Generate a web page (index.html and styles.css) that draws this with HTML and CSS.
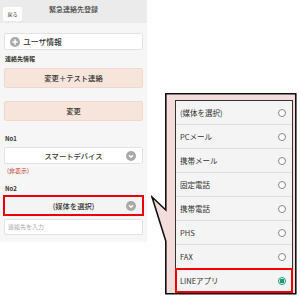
FILE: index.html
```html
<!DOCTYPE html>
<html lang="ja">
<head>
<meta charset="utf-8">
<link rel="stylesheet" href="styles.css">
</head>
<body>
<div class="phone">
  <div class="hdr">
    <span class="back">戻る</span>
    <span class="title">緊急連絡先登録</span>
    <span></span>
  </div>
  <div class="content">
    <div class="btn white user">
      <svg class="ico" viewBox="0 0 10 10" width="10" height="10"><circle cx="5" cy="5" r="5" fill="#a9a9a9"/><path d="M5 2.3V7.7M2.3 5H7.7" stroke="#fff" stroke-width="1.6"/></svg>
      <span>ユーザ情報</span>
    </div>
    <div class="label l1">連絡先情報</div>
    <div class="btn peach b1">変更＋テスト連絡</div>
    <div class="btn peach b2">変更</div>
    <div class="label l2">No1</div>
    <div class="btn white sel">
      <span>スマートデバイス</span>
      <svg class="chev" viewBox="0 0 10 10" width="10" height="10"><circle cx="5" cy="5" r="5" fill="#a9a9a9"/><path d="M3 4.2L5 6.2L7 4.2" stroke="#fff" stroke-width="1.5" fill="none"/></svg>
    </div>
    <div class="hidden">(非表示)</div>
    <div class="label l3">No2</div>
    <div class="redbox">
      <div class="btn white sel sel2">
        <span>(媒体を選択)</span>
        <svg class="chev" viewBox="0 0 10 10" width="10" height="10"><circle cx="5" cy="5" r="5" fill="#a9a9a9"/><path d="M3 4.2L5 6.2L7 4.2" stroke="#fff" stroke-width="1.5" fill="none"/></svg>
      </div>
    </div>
    <div class="input">連絡先を入力</div>
  </div>
</div>

<div class="callout">
  <svg class="bubble" viewBox="0 0 146 202" width="146" height="202">
    <path d="M14.8 0.8H144.8V200.8H14.8V148L1 104L14.8 117Z" fill="#f2dcdc" stroke="#111" stroke-width="1.6" stroke-linejoin="miter"/>
  </svg>
  <ul class="list">
    <li>(媒体を選択)<i class="radio"></i></li>
    <li>PCメール<i class="radio"></i></li>
    <li>携帯メール<i class="radio"></i></li>
    <li>固定電話<i class="radio"></i></li>
    <li>携帯電話<i class="radio"></i></li>
    <li>PHS<i class="radio"></i></li>
    <li>FAX<i class="radio"></i></li>
    <li class="on">LINEアプリ<i class="radio checked"></i></li>
  </ul>
</div>
</body>
</html>
```

FILE: styles.css
```css
* { box-sizing: border-box; }
html, body { margin: 0; padding: 0; background: #fff; }
body {
  width: 300px;
  height: 297px;
  position: relative;
  overflow: hidden;
  font-family: "Noto Sans CJK JP", "Noto Sans", sans-serif;
  color: #333;
}
.phone {
  width: 147px;
  background: #f6f6f6;
  padding-bottom: 7px;
}
.hdr {
  height: 23px;
  background: #ebebeb;
  display: grid;
  grid-template-columns: 24px 1fr 24px;
  align-items: start;
}
.back {
  margin: 7px 0 0 3px;
  width: 19px;
  height: 14px;
  background: #fff;
  border-radius: 2px;
  font-size: 5px;
  line-height: 14px;
  text-align: center;
  color: #333;
}
.title {
  margin-top: 4px;
  font-size: 7px;
  line-height: 10px;
  text-align: center;
  color: #444;
  font-weight: 500;
}
.content {
  padding: 10px 4px 0 4px;
  display: flex;
  flex-direction: column;
}
.btn {
  display: flex;
  align-items: center;
  justify-content: center;
  font-size: 7.3px;
  font-weight: 500;
  color: #333;
  border-radius: 2px;
  position: relative;
}
.white {
  background: #fff;
  border: 1px solid #e2e2e2;
}
.peach {
  background: #f7e4da;
  border: 1px solid #efd9cd;
}
.user {
  height: 17px;
  justify-content: flex-start;
  padding-left: 5px;
  gap: 3px;
  font-size: 7.8px;
}
.label {
  font-size: 6px;
  font-weight: bold;
  color: #333;
  padding-left: 1px;
}
.l1 { margin-top: 4px; line-height: 10px; }
.b1 { margin-top: 4px; height: 20px; }
.b2 { margin-top: 13px; height: 20px; }
.l2 { margin-top: 13px; line-height: 10px; }
.sel { margin-top: 3px; height: 17px; }
.sel .chev { position: absolute; right: 6px; top: 50%; margin-top: -5px; }
.hidden {
  font-size: 6px;
  color: #c0392b;
  line-height: 10px;
  margin-top: 2px;
  padding-left: 3px;
}
.l3 { margin-top: 8px; }
.redbox {
  margin: 2px -1px 0 -1px;
  border: 2px solid #ee0000;
}
.sel2 { margin-top: 0; height: 17px; border: none; border-radius: 0; background: #f4f4f4; }
.input {
  margin-top: 3px;
  height: 16px;
  background: #fff;
  border: 1px solid #e2e2e2;
  border-radius: 2px;
  font-size: 6px;
  color: #aaa;
  padding-left: 3px;
  line-height: 14px;
}
.callout {
  position: absolute;
  left: 151px;
  top: 93px;
  width: 146px;
  height: 202px;
}
.bubble { position: absolute; left: 0; top: 0; }
.list {
  position: absolute;
  left: 24px;
  top: 7px;
  width: 118px;
  height: 193px;
  margin: 0;
  padding: 0;
  list-style: none;
  background: #f4f4f4;
  border: 1px solid #333;
  display: flex;
  flex-direction: column;
}
.list li {
  flex: 1;
  display: flex;
  align-items: center;
  justify-content: space-between;
  padding: 0 6px 0 4px;
  font-size: 7.5px;
  color: #333;
  border-bottom: 1px solid #dedede;
  position: relative;
}
.list li:last-child { border-bottom: none; }
.list li.on { outline: 2px solid #ee0000; outline-offset: -1px; }
.radio {
  width: 8px;
  height: 8px;
  border-radius: 50%;
  border: 1px solid #888;
  background: #fff;
}
.radio.checked {
  border-color: #1c9a78;
  background: radial-gradient(circle, #1c9a78 0 2.2px, #fff 2.6px);
}
```
